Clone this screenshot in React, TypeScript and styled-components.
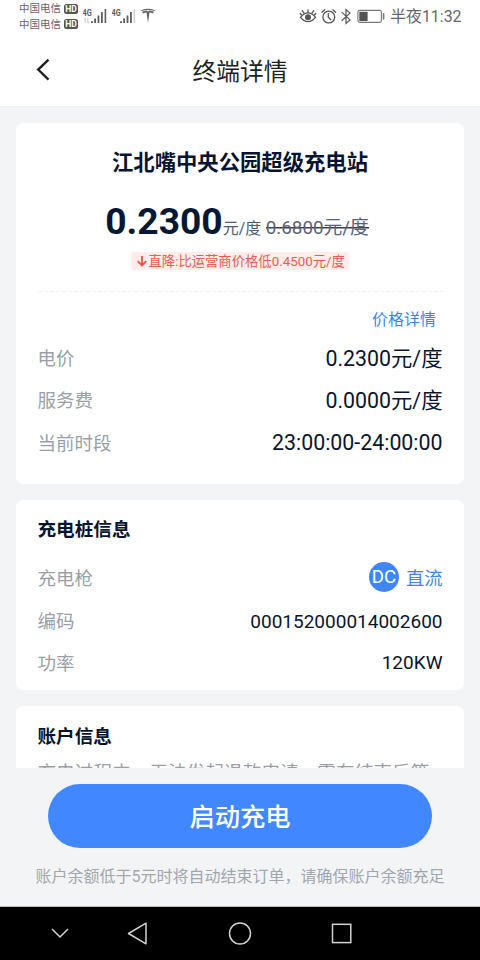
import React from 'react';
import styled, { createGlobalStyle } from 'styled-components';

const GlobalStyle = createGlobalStyle`
  * { box-sizing: border-box; }
  body {
    margin: 0;
    background: #f3f4f6;
    font-family: Roboto, "Noto Sans CJK SC", sans-serif;
  }
`;

const Screen = styled.div`
  width: 480px;
  height: 960px;
  display: flex;
  flex-direction: column;
  overflow: hidden;
  background: #f3f4f6;
  white-space: nowrap;
`;

const StatusBar = styled.div`
  height: 33px;
  flex: none;
  display: flex;
  justify-content: space-between;
  background: #fff;
  color: #666;
  padding: 0 18.5px 0 19px;
`;

const StatusGroup = styled.div`
  display: flex;
  align-items: flex-start;
`;

const Carriers = styled.div`
  display: flex;
  flex-direction: column;
  padding-top: 1px;
`;

const Carrier = styled.div`
  height: 15.5px;
  display: flex;
  align-items: center;
  gap: 3px;
  font-size: 10.5px;
  line-height: 15px;
`;

const HdBadge = styled.span`
  width: 14px;
  height: 10px;
  border-radius: 2.5px;
  background: #555;
  color: #fff;
  font-size: 8.5px;
  font-weight: 700;
  line-height: 10px;
  text-align: center;
`;

const Clock = styled.span`
  margin-left: 5px;
  font-size: 15.9px;
  line-height: 34px;
`;

const Header = styled.header`
  height: 74px;
  flex: none;
  display: grid;
  grid-template-columns: 86px 1fr 86px;
  align-items: center;
  background: #fff;
  border-bottom: 1px solid #eff1f3;
`;

const BackButton = styled.button`
  height: 40px;
  padding: 0 0 0 34px;
  border: 0;
  background: none;
  display: flex;
  align-items: center;
`;

const HeaderTitle = styled.h1`
  margin: 0;
  padding-top: 4px;
  color: #1e1f22;
  font-size: 23.8px;
  line-height: 36px;
  font-weight: 400;
  text-align: center;
`;

const Content = styled.main`
  height: 661px;
  flex: none;
  overflow: hidden;
  padding: 16px 16px 0;
  display: flex;
  flex-direction: column;
  gap: 16px;
`;

const Card = styled.section<{ $height: number }>`
  height: ${(p) => p.$height}px;
  flex: none;
  border-radius: 7px;
  background: #fff;
  padding: 0 21.5px;
`;

const StationName = styled.h2`
  margin: 0;
  padding-top: 23px;
  color: #061431;
  font-size: 21.33px;
  line-height: 34px;
  font-weight: 700;
  text-align: center;
`;

const PriceLine = styled.div`
  height: 58px;
  margin-top: 14px;
  padding-right: 6px;
  display: flex;
  justify-content: center;
  align-items: baseline;
  color: #515c70;
  line-height: 54px;
`;

const Price = styled.strong`
  color: #061832;
  font-size: 37.2px;
  font-weight: 700;
`;

const PriceUnit = styled.span`
  font-size: 16px;
`;

const OldPrice = styled.s`
  margin-left: 4.5px;
  font-size: 18.8px;
  color: #596275;
  text-decoration: none;
  background: linear-gradient(#363d51, #363d51) 0 50% / 100% 1.5px no-repeat;
  line-height: 24px;
`;

const Discount = styled.div`
  width: 218px;
  height: 18px;
  margin: 0 auto;
  padding-left: 4.5px;
  display: flex;
  align-items: center;
  border-radius: 2px;
  background: #ffeceb;
  color: #e85d51;
  font-size: 13.33px;
  line-height: 18px;
`;

const DiscountText = styled.span`
  padding-top: 2px;
`;

const Divider = styled.div`
  height: 1px;
  margin-top: 21px;
  background: repeating-linear-gradient(90deg, #eff0f2 0 4px, transparent 4px 6px);
`;

const DetailLink = styled.a`
  display: block;
  height: 44px;
  padding: 10px 6.5px 0 0;
  color: #3f84ee;
  font-size: 16px;
  line-height: 36px;
  text-align: right;
`;

const Row = styled.div<{ $height: number }>`
  height: ${(p) => p.$height}px;
  display: flex;
  justify-content: space-between;
  align-items: center;
`;

const Label = styled.span`
  color: #9a9fa7;
  font-size: 18.5px;
`;

const Value = styled.span<{ $size?: number }>`
  padding-top: 3px;
  color: #08152d;
  font-size: ${(p) => p.$size ?? 21.33}px;
  line-height: 28px;
`;

const SectionTitle = styled.h3`
  margin: 0;
  padding-top: 16.5px;
  color: #061431;
  font-size: 18.6px;
  line-height: 28px;
  font-weight: 700;
`;

const GunType = styled.span`
  display: flex;
  align-items: center;
  gap: 7px;
  color: #3f84ee;
  font-size: 18.3px;
`;

const TypeBadge = styled.span`
  width: 30px;
  height: 30px;
  border-radius: 50%;
  background: #4086fb;
  color: #fff;
  font-size: 18.67px;
  line-height: 31px;
  display: flex;
  justify-content: center;
`;

const Notice = styled.p`
  margin: 8.5px 0 0;
  color: #9a9fa7;
  font-size: 18.67px;
  line-height: 28px;
`;

const Footer = styled.footer`
  height: 139px;
  flex: none;
  padding: 15.5px 0 0;
  display: flex;
  flex-direction: column;
  align-items: center;
  border-bottom: 1px solid #b9bbbd;
`;

const StartButton = styled.button`
  width: 384px;
  height: 64px;
  padding: 5px 0 0;
  border: 0;
  border-radius: 32px;
  background: #4187ff;
  color: #fff;
  font-family: inherit;
  font-size: 25.3px;
  line-height: 36px;
  font-weight: 500;
`;

const Hint = styled.p`
  margin: 17px 0 0;
  color: #a2a6ad;
  font-size: 16px;
  line-height: 24px;
`;

const NavBar = styled.nav`
  height: 53px;
  flex: none;
  background: #000;
`;

function Signal({ faded, arrows }: { faded?: boolean; arrows?: boolean }) {
  return (
    <svg width="24" height="24" viewBox="0 0 24 24" fill="#5b5b5b">
      <text x="-.5" y="9.6" fontSize="9.6" fontWeight="700" textLength="9.2" lengthAdjust="spacingAndGlyphs">4G</text>
      {arrows && (
        <path d="M2.2 17v-5M.9 13.4l1.3-1.5M4.8 12v5M6.1 15.6l-1.3 1.5" stroke="#c5c5c5" fill="none" strokeWidth=".9" />
      )}
      <rect x="8" y="15.3" width="2" height="1.7" />
      <rect x="11.2" y="12.5" width="1.8" height="4.5" />
      <rect x="14.6" y="9.5" width="1.8" height="7.5" />
      <rect x="18" y="6" width="1.8" height="11" />
      <rect x="21.6" y="3" width="1.6" height="14" fill={faded ? '#cfcfcf' : '#5b5b5b'} />
    </svg>
  );
}

const SignalGroup = styled.div`
  display: flex;
  gap: 5px;
  padding: 6px 0 0 5px;
`;

function StatusIcons() {
  return (
    <svg width="86" height="33" viewBox="0 0 86 33" fill="none" stroke="#555" strokeWidth="1.3" strokeLinecap="round">
      <path d="M1.5 17.3Q9 8.6 16.5 17.3Q9 26 1.5 17.3Z" />
      <circle cx="9" cy="17.2" r="3" fill="#555" stroke="none" />
      <path d="M9 12.3V9.8M5 13L3.2 10.7M13 13l1.8-2.3M2.5 15L1.2 13.5M15.5 15l1.3-1.5" />
      <circle cx="29.8" cy="17" r="5.9" />
      <path d="M29.3 13.6v3.7l2.4 2.2M23 12.200l2.7-2.5M36.6 12.200l-2.7-2.5" />
      <path d="M43 12.4l8 7.5-4 3.5V9.6l4 3.5-8 7.4" strokeWidth="1.2" />
      <rect x="58.9" y="10.4" width="23.500" height="12" rx="1.8" stroke="#777" strokeWidth="1.1" />
      <rect x="60.3" y="11.8" width="8.3" height="9.2" fill="#555" stroke="none" />
      <path d="M84.6 13.7v5.3" stroke="#777" strokeWidth="1.6" />
    </svg>
  );
}

const TeslaIcon = styled.svg`
  margin: 8px 0 0 4.5px;
`;

const cost = [
  ['电价', '0.2300元/度'],
  ['服务费', '0.0000元/度'],
  ['当前时段', '23:00:00-24:00:00'],
];

export default function App() {
  return (
    <>
      <GlobalStyle />
      <Screen>
        <StatusBar>
          <StatusGroup>
            <Carriers>
              <Carrier>中国电信<HdBadge>HD</HdBadge></Carrier>
              <Carrier>中国电信<HdBadge>HD</HdBadge></Carrier>
            </Carriers>
            <SignalGroup>
              <Signal arrows />
              <Signal faded />
            </SignalGroup>
            <TeslaIcon width="14" height="16" viewBox="0 0 14 16" fill="#666">
              <path d="M0 2.200Q7-.6 14 2.200l-.4.9Q7 .7.4 3.100Z" />
              <path d="M.9 3.800Q3.500 2.500 5.800 2.400L7 3.600l1.200-1.200q2.300.1 4.900 1.400-.6 1.400-1.800 1.600-.8-.9-2.800-1L7 15 5.500 4.400q-2 .1-2.800 1Q1.500 5.200.9 3.800Z" />
            </TeslaIcon>
          </StatusGroup>
          <StatusGroup>
            <StatusIcons />
            <Clock>半夜11:32</Clock>
          </StatusGroup>
        </StatusBar>

        <Header>
          <BackButton aria-label="返回">
            <svg width="18" height="24" viewBox="0 0 18 24" fill="none" stroke="#1e1f22" strokeWidth="2.4">
              <path d="M14.5 1.6L4.2 11.6L14.5 21.6" />
            </svg>
          </BackButton>
          <HeaderTitle>终端详情</HeaderTitle>
        </Header>

        <Content>
          <Card $height={360.5}>
            <StationName>江北嘴中央公园超级充电站</StationName>
            <PriceLine>
              <Price>0.2300</Price>
              <PriceUnit>元/度</PriceUnit>
              <OldPrice>0.6800元/度</OldPrice>
            </PriceLine>
            <Discount>
              <svg width="13" height="14" viewBox="0 0 13 14" fill="none" stroke="#ef5146" strokeWidth="1.8">
                <path d="M6 2v9.5M1.7 7.2L6 11.5L10.3 7.2" />
              </svg>
              <DiscountText>直降:比运营商价格低0.4500元/度</DiscountText>
            </Discount>
            <Divider />
            <DetailLink>价格详情</DetailLink>
            {cost.map(([label, value]) => (
              <Row key={label} $height={42.3}>
                <Label>{label}</Label>
                <Value>{value}</Value>
              </Row>
            ))}
          </Card>

          <Card $height={190.5}>
            <SectionTitle>充电桩信息</SectionTitle>
            <Row $height={65.5}>
              <Label>充电枪</Label>
              <GunType><TypeBadge>DC</TypeBadge>直流</GunType>
            </Row>
            <Row $height={21}>
              <Label>编码</Label>
              <Value $size={19}>000152000014002600</Value>
            </Row>
            <Row $height={62}>
              <Label>功率</Label>
              <Value $size={19}>120KW</Value>
            </Row>
          </Card>

          <Card $height={190}>
            <SectionTitle>账户信息</SectionTitle>
            <Notice>充电过程中，无法发起退款申请，需在结束后等</Notice>
          </Card>
        </Content>

        <Footer>
          <StartButton>启动充电</StartButton>
          <Hint>账户余额低于5元时将自动结束订单，请确保账户余额充足</Hint>
        </Footer>

        <NavBar>
          <svg width="480" height="53" viewBox="0 0 480 53" fill="none" stroke="#d2d2d2" strokeWidth="1.5">
            <path d="M52 22l8 8 8-8" />
            <path d="M146 16.2v20.6L128.5 26.5Z" strokeLinejoin="round" />
            <circle cx="240" cy="26.5" r="10.5" />
            <rect x="332.5" y="17.3" width="18.3" height="18.3" />
          </svg>
        </NavBar>
      </Screen>
    </>
  );
}
